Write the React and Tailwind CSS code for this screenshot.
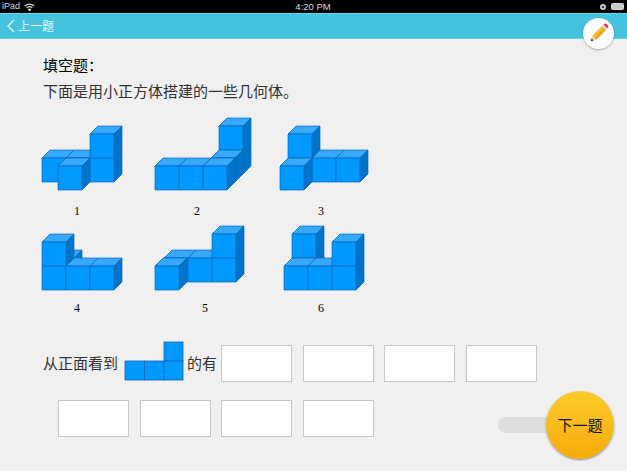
const CJK = { fontFamily: '"Noto Sans CJK SC", sans-serif' };

// cube positions are the top-left corner of the front face, back to front
const figuresTop = [
  { label: '1', labelClass: 'ml-[31px]', width: 113, x: 40, cubes: [[42, 158], [66, 158], [90, 158], [90, 134], [58, 166]] },
  { label: '2', labelClass: 'ml-[38px]', width: 125, x: 153, cubes: [[155, 166], [179, 166], [219, 150], [219, 126], [211, 158], [203, 166]] },
  { label: '3', labelClass: 'ml-[37px]', width: 100, x: 278, cubes: [[288, 158], [312, 158], [336, 158], [288, 134], [280, 166]] },
];

const figuresBottom = [
  { label: '4', labelClass: 'ml-[31px]', width: 113, x: 40, cubes: [[50, 258], [42, 266], [66, 266], [90, 266], [42, 242]] },
  { label: '5', labelClass: 'ml-[46px]', width: 125, x: 153, cubes: [[164, 258], [188, 258], [212, 258], [212, 234], [155, 266]] },
  { label: '6', labelClass: 'ml-[37px]', width: 100, x: 278, cubes: [[292, 258], [292, 234], [284, 266], [308, 266], [332, 266], [332, 242]] },
];

const S = 24;
const D = 8;

const facePoints = (x, y) => ({
  front: `${x},${y} ${x + S},${y} ${x + S},${y + S} ${x},${y + S}`,
  top: `${x},${y} ${x + D},${y - D} ${x + S + D},${y - D} ${x + S},${y}`,
  right: `${x + S},${y} ${x + S + D},${y - D} ${x + S + D},${y + S - D} ${x + S},${y + S}`,
});

const Cube = ({ x, y }) => {
  const f = facePoints(x, y);
  return (
    <g stroke="#0a68bd" strokeWidth="0.8" strokeLinejoin="round">
      <polygon points={f.top} fill="#37a9fb" />
      <polygon points={f.right} fill="#0074cb" />
      <polygon points={f.front} fill="#0099ff" />
    </g>
  );
};

const Figure = ({ figure, y, height }) => (
  <svg width={figure.width} height={height} viewBox={`${figure.x} ${y} ${figure.width} ${height}`} className="block">
    {/* soft white halo round the shape */}
    <g stroke="#ffffff" strokeWidth="2" strokeLinejoin="round" fill="#ffffff">
      {figure.cubes.map(([cx, cy], i) => (
        <polygon key={i} points={`${cx},${cy} ${cx + D},${cy - D} ${cx + S + D},${cy - D} ${cx + S + D},${cy + S - D} ${cx + S},${cy + S} ${cx},${cy + S}`} />
      ))}
    </g>
    {figure.cubes.map(([cx, cy], i) => (
      <Cube key={i} x={cx} y={cy} />
    ))}
  </svg>
);

const FigureRow = ({ figures, y, height, className }) => (
  <div className={`flex ${className}`}>
    {figures.map((figure) => (
      <div key={figure.label} style={{ width: figure.width }}>
        <Figure figure={figure} y={y} height={height} />
        <div className={`${figure.labelClass} w-[12px] text-center text-[12px] leading-[14px] text-black`} style={{ fontFamily: '"Liberation Serif", serif' }}>
          {figure.label}
        </div>
      </div>
    ))}
  </div>
);

const AnswerBox = () => (
  <div className="h-[37px] w-[71px] shrink-0 border border-[#c6c6c6] bg-white" />
);

const FrontView = () => (
  <svg width="60" height="40" viewBox="0 0 60 40" className="mb-[5px] block shrink-0">
    <g stroke="#0a68bd" strokeWidth="0.8" fill="#0099ff">
      <rect x="40" y="1" width="19" height="19" />
      <rect x="1" y="20" width="19.5" height="19" />
      <rect x="20.5" y="20" width="19.5" height="19" />
      <rect x="40" y="20" width="19" height="19" />
    </g>
  </svg>
);

const Pencil = () => (
  <svg width="19" height="19" viewBox="0 0 24 24" className="mb-[3px] ml-[2px]">
    <polygon points="1,23 3,16 8,21" fill="#f4d8a8" />
    <polygon points="1,23 2,19.5 4.5,22" fill="#222222" />
    <polygon points="3,16 16,3 21,8 8,21" fill="#f2a21a" />
    <polygon points="3,16 16,3 18.5,5.5 5.5,18.5" fill="#fbc02d" />
    <polygon points="15,4 17.5,1.5 22.5,6.5 20,9" fill="#d8d8d8" />
    <path d="M17 2 L18.5 0.8 Q19.5 0.2 20.5 1 L23 3.5 Q23.8 4.5 23 5.5 L22 6.5 Z" fill="#d9363a" />
  </svg>
);

const StatusBar = () => (
  <div className="flex h-[13px] items-center justify-between bg-black pl-[2px] pr-[3px] text-[9px] leading-none text-[#d8d8d8]" style={{ fontFamily: '"Liberation Sans", sans-serif' }}>
    <div className="flex w-[100px] items-center gap-[4px]">
      <span>iPad</span>
      <svg width="11" height="8" viewBox="0 0 11 8" fill="none" stroke="#d8d8d8" strokeWidth="1.1">
        <path d="M0.8 3 Q5.5 -0.8 10.2 3" />
        <path d="M2.6 4.8 Q5.5 2.4 8.4 4.8" />
        <path d="M4.4 6.5 Q5.5 5.6 6.6 6.5 L5.5 7.6 Z" fill="#d8d8d8" />
      </svg>
    </div>
    <span className="text-[9.5px]">4:20 PM</span>
    <div className="flex w-[100px] items-center justify-end gap-[5px]">
      <span className="h-[6px] w-[6px] rounded-full border-2 border-[#c8c8c8]" />
      <span className="h-[7px] w-[13px] rounded-[1.5px] border border-[#d8d8d8] bg-[#c8c8c8]" />
    </div>
  </div>
);

export default function App() {
  return (
    <div className="relative h-[471px] w-[627px] overflow-hidden bg-[#f0f0f0]" style={CJK}>
      <StatusBar />

      <div className="flex h-[26px] items-center gap-[3px] border-y border-t-[#63d9ef] border-b-[#5fd3ea] bg-[#45c2de] pl-[6px] text-[12px] text-[#e6f7fb]">
        <svg width="9" height="14" viewBox="0 0 9 14" fill="none" stroke="#eef9fc" strokeWidth="1.4">
          <path d="M8 1 L2 7 L8 13" />
        </svg>
        <span>上一题</span>
      </div>

      <div className="pl-[43px] pt-[15px] text-[15px] leading-[22px] text-[#333333]">
        <div className="text-black">填空题：</div>
        <div className="mt-[4px]">下面是用小正方体搭建的一些几何体。</div>
      </div>

      <FigureRow figures={figuresTop} y={116} height={88} className="mt-[14px] pl-[40px]" />
      <FigureRow figures={figuresBottom} y={224} height={77} className="mt-[6px] pl-[40px]" />

      <div className="mt-[26px] flex items-center pl-[43px] text-[15px] text-[#333333]">
        <span className="w-[81px]">从正面看到</span>
        <FrontView />
        <span className="ml-[3px] w-[34px]">的有</span>
        <div className="flex gap-[10.6px]">
          <AnswerBox />
          <AnswerBox />
          <AnswerBox />
          <AnswerBox />
        </div>
      </div>

      <div className="mt-[14px] flex gap-[10.6px] pl-[58px]">
        <AnswerBox />
        <AnswerBox />
        <AnswerBox />
        <AnswerBox />
      </div>

      {/* floating pencil button */}
      <div className="absolute left-[583px] top-[18px] flex h-[31px] w-[31px] items-center justify-center rounded-full bg-white shadow-[0_1px_2px_rgba(0,0,0,0.3)]">
        <Pencil />
      </div>

      {/* next question button sitting on its track */}
      <div className="absolute left-[498px] top-[417px] h-[16px] w-[60px] rounded-full bg-[#dedede]" />
      <div className="absolute left-[546px] top-[391px] flex h-[68px] w-[68px] items-center justify-center rounded-full bg-gradient-to-b from-[#fccb2a] to-[#f5ab06] text-[15px] text-[#1a1200] shadow-[0_1px_2px_rgba(60,70,130,0.6)]">
        下一题
      </div>
    </div>
  );
}
